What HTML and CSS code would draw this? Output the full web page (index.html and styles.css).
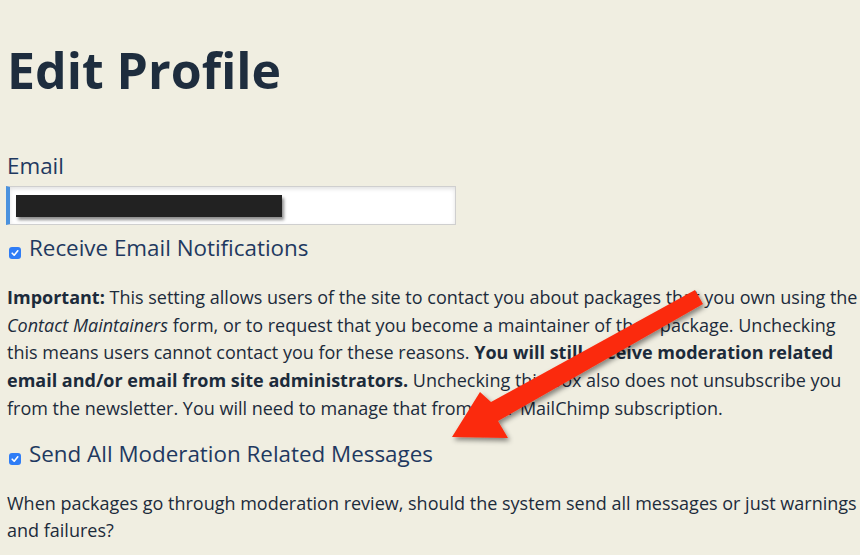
FILE: index.html
```html
<!DOCTYPE html>
<html>
<head>
<meta charset="utf-8">
<link rel="stylesheet" href="styles.css">
</head>
<body>
<main class="page">
  <h1 class="title">Edit Profile</h1>
  <div class="field">
    <label class="field-label">Email</label>
    <div class="input">
      <span class="redact"></span>
    </div>
  </div>
  <label class="check">
    <span class="box"><svg viewBox="0 0 12 12" width="12" height="12"><path d="M3.2 6.2 L5.2 8.2 L8.8 3.8" fill="none" stroke="#fff" stroke-width="1.6" stroke-linecap="round" stroke-linejoin="round"/></svg></span>
    <span class="check-text">Receive Email Notifications</span>
  </label>
  <p class="note note-first"><strong>Important:</strong> This setting allows users of the site to contact you about packages that you own using the <em>Contact Maintainers</em> form, or to request that you become a maintainer of their package. Unchecking this means users cannot contact you for these reasons. <strong>You will still receive moderation related email and/or email from site administrators.</strong> Unchecking this box also does not unsubscribe you from the newsletter. You will need to manage that from your MailChimp subscription.</p>
  <label class="check">
    <span class="box"><svg viewBox="0 0 12 12" width="12" height="12"><path d="M3.2 6.2 L5.2 8.2 L8.8 3.8" fill="none" stroke="#fff" stroke-width="1.6" stroke-linecap="round" stroke-linejoin="round"/></svg></span>
    <span class="check-text">Send All Moderation Related Messages</span>
  </label>
  <p class="note note-last">When packages go through moderation review, should the system send all messages or just warnings and failures?</p>
</main>
<svg class="arrow" width="860" height="555" viewBox="0 0 860 555">
  <defs>
    <filter id="sh" x="-20%" y="-20%" width="140%" height="140%">
      <feDropShadow dx="2" dy="3" stdDeviation="2.5" flood-color="#000" flood-opacity="0.45"/>
    </filter>
  </defs>
  <polygon filter="url(#sh)" fill="#fb2a0c" points="695,290 703,304 498,421 508,438 452,437 480,392 491,402"/>
</svg>
</body>
</html>
```
FILE: styles.css
```css
html, body {
  margin: 0;
  padding: 0;
  background: #f0eee1;
}
body {
  font-family: "Open Sans", "Noto Sans", sans-serif;
  color: #1c2b3b;
  overflow: hidden;
  height: 555px;
  position: relative;
}
.page {
  padding: 0 0 0 7px;
  width: 853px;
}
.title {
  margin: 36px 0 0 0;
  font-size: 50px;
  font-weight: 700;
  color: #1e2d3e;
  line-height: 68px;
}
.field {
  margin-top: 47px;
  display: flex;
  flex-direction: column;
}
.field-label {
  font-size: 22.4px;
  color: #1f3960;
  line-height: 30px;
}
.input {
  margin-top: 5px;
  margin-left: -1px;
  width: 450px;
  height: 39px;
  background: #fff;
  border: 1px solid #cfcfcf;
  border-left: 4px solid #4a92de;
  box-shadow: inset 0 2px 4px rgba(0,0,0,0.12);
  display: flex;
  align-items: center;
  padding-left: 6px;
  box-sizing: border-box;
}
.redact {
  width: 266px;
  height: 22px;
  background: #222;
  box-shadow: 2px 3px 3px rgba(0,0,0,0.45);
}
.check {
  display: flex;
  align-items: flex-start;
  gap: 8px;
  margin-top: 8px;
}
.box {
  width: 12px;
  height: 12px;
  border-radius: 3px;
  background: #2f7df6;
  display: inline-flex;
  margin-left: 2px;
  margin-top: 14px;
}
.check-text {
  font-size: 22.4px;
  color: #1f3960;
  line-height: 30px;
}
.note {
  margin: 18px 0 0 0;
  font-size: 18px;
  line-height: 27.7px;
}
.note-first {
  margin-top: 21px;
}
.note + .check {
  margin-top: 16px;
}
.note-last {
  margin-top: 21px;
}
.note strong { font-weight: 700; }
.arrow {
  position: absolute;
  left: 0;
  top: 0;
  pointer-events: none;
}
```
